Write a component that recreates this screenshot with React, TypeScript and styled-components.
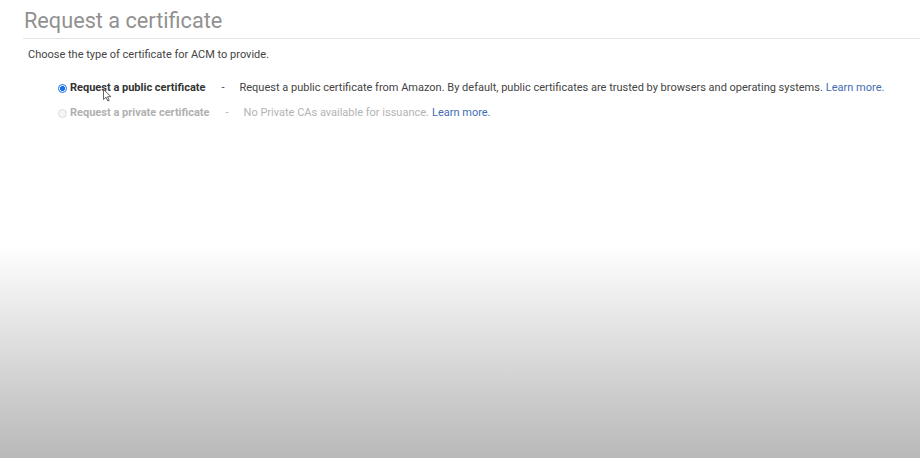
import React from "react";
import styled, { createGlobalStyle } from "styled-components";

const Global = createGlobalStyle`
  html, body {
    margin: 0;
    padding: 0;
    height: 100%;
  }
  body {
    font-family: Roboto, "Liberation Sans", Arial, sans-serif;
    background: linear-gradient(
      to bottom,
      #ffffff 0px,
      #ffffff 245px,
      #f0f0f0 290px,
      #dcdcdc 350px,
      #cbcbcb 400px,
      #b9b9b9 458px
    );
    background-repeat: no-repeat;
    min-height: 458px;
  }
`;

const Page = styled.main`
  position: relative;
  padding: 8px 0 0 23px;
  min-height: 450px;
  box-sizing: border-box;
`;

const Title = styled.h1`
  margin: 0;
  padding: 0 0 4px 1px;
  font-family: Roboto, "Liberation Sans", sans-serif;
  font-weight: 400;
  font-size: 21.7px;
  line-height: 26px;
  color: #919191;
  border-bottom: 1px solid #e4e4e4;
`;

const Intro = styled.p`
  margin: 9px 0 0 5px;
  font-size: 11px;
  line-height: 14px;
  color: #444;
`;

const Options = styled.div`
  display: flex;
  flex-direction: column;
  gap: 11px;
  margin: 19px 0 0 35px;
`;

const Option = styled.label<{ $disabled?: boolean }>`
  display: flex;
  align-items: center;
  white-space: nowrap;
  font-size: 11px;
  line-height: 14px;
  color: ${(p) => (p.$disabled ? "#b3b3b3" : "#444")};
`;

const Radio = styled.span<{ $checked?: boolean; $disabled?: boolean }>`
  width: 9px;
  height: 9px;
  border-radius: 50%;
  box-sizing: border-box;
  margin: 0 3px 0 0;
  flex: none;
  border: 1px solid ${(p) => (p.$checked ? "#1a73e8" : "#dcdcdc")};
  background: ${(p) =>
    p.$checked
      ? "radial-gradient(circle, #1a73e8 0 2.3px, #ffffff 2.8px)"
      : "#f4f4f4"};
`;

const Label = styled.span<{ $disabled?: boolean }>`
  font-weight: 700;
  flex: none;
  color: ${(p) => (p.$disabled ? "#b0b0b0" : "#333")};
`;

const Dash = styled.span`
  margin: 0 15px 0 16px;
  flex: none;
  color: inherit;
`;

const Desc = styled.span``;

const Link = styled.a`
  color: #3f6db3;
  text-decoration: none;
  margin-left: 3px;
`;

const Cursor = styled.svg`
  position: absolute;
  left: 103px;
  top: 89px;
`;

export default function App() {
  return (
    <>
      <Global />
      <Page>
        <Title>Request a certificate</Title>
        <Intro>Choose the type of certificate for ACM to provide.</Intro>
        <Options>
          <Option>
            <Radio $checked />
            <Label>Request a public certificate</Label>
            <Dash>-</Dash>
            <Desc>
              Request a public certificate from Amazon. By default, public certificates are
              trusted by browsers and operating systems.
            </Desc>
            <Link href="#">Learn more.</Link>
          </Option>
          <Option $disabled>
            <Radio $disabled />
            <Label $disabled>Request a private certificate</Label>
            <Dash>-</Dash>
            <Desc>No Private CAs available for issuance.</Desc>
            <Link href="#">Learn more.</Link>
          </Option>
        </Options>
        <Cursor width="9" height="13" viewBox="0 0 9 13">
          <path
            d="M0.5 0.5 L0.5 10.5 L3 8.2 L4.8 12 L6.2 11.4 L4.5 7.7 L8 7.7 Z"
            fill="#ffffff"
            stroke="#555"
            strokeWidth="0.9"
            strokeLinejoin="round"
          />
        </Cursor>
      </Page>
    </>
  );
}
